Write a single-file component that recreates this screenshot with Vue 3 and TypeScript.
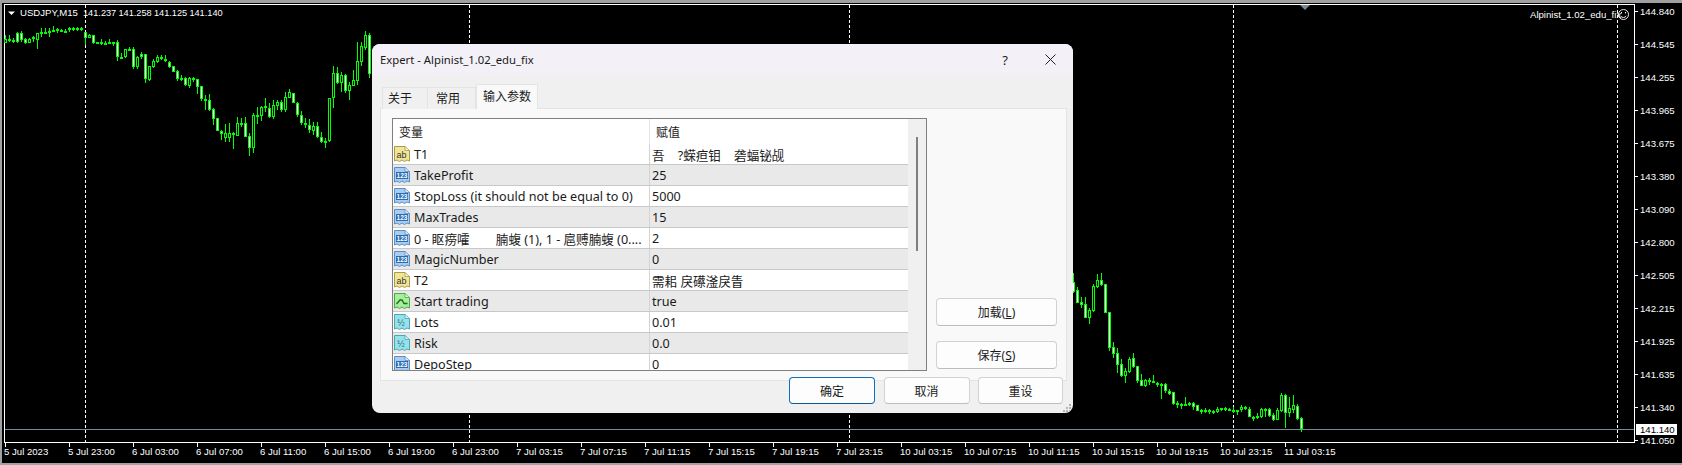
<script setup lang="ts">
type Raw = [number, number, number, number, string]

const leftRaw: Raw[] = [
  [105,118,128,130,'b'],[105,118,122,125,'d'],[115,120,125,128,'d'],[97,100,125,130,'w'],[93,98,120,125,'w'],[115,118,128,132,'w'],
  [113,116,128,130,'b'],[108,112,118,125,'w'],[98,100,120,146,'b'],[85,97,102,110,'d'],[85,97,100,103,'d'],[85,92,100,110,'b'],
  [78,90,92,93,'d'],[84,88,93,100,'d'],[88,90,94,97,'d'],[88,92,95,98,'d'],[82,84,90,95,'w'],[82,85,90,92,'d'],[82,85,90,92,'d'],[82,85,90,92,'d'],
  [97,97,113,135,'w'],[103,105,113,114,'b'],[104,106,130,132,'w'],[125,127,130,132,'d'],[118,125,130,135,'d'],[122,129,131,135,'d'],[118,127,129,132,'d'],[125,127,130,138,'d'],
  [120,127,172,183,'w'],[160,170,173,177,'d'],[148,148,172,173,'b'],[142,147,149,152,'d'],[142,148,200,208,'w'],[168,170,200,208,'b'],[155,162,172,178,'w'],[162,162,238,250,'w'],
  [197,198,240,243,'b'],[178,184,202,205,'b'],[165,170,185,188,'b'],[165,170,176,180,'w'],[165,177,184,187,'w'],[183,185,200,203,'w'],[197,198,215,217,'w'],[210,214,236,242,'w'],
  [225,235,238,243,'d'],[230,235,256,258,'w'],[232,235,258,263,'b'],[230,235,238,245,'d'],[237,238,260,282,'w'],[257,258,298,302,'w'],[285,297,302,330,'d'],[283,300,330,332,'w'],
  [325,328,356,375,'w'],[355,355,392,392,'w'],[390,392,402,420,'w'],[372,400,413,425,'b'],[370,398,413,425,'b'],[395,398,405,447,'d'],[352,370,407,407,'b'],[353,368,371,380,'d'],
  [350,370,410,412,'w'],[400,408,445,467,'w'],[340,345,445,460,'b'],[322,345,347,372,'d'],[318,320,347,362,'b'],[295,318,325,335,'w'],[310,323,350,355,'w'],[300,315,350,358,'b'],
  [300,305,317,330,'b'],[300,305,330,335,'w'],[275,292,330,335,'b'],[268,275,293,295,'b'],[280,280,308,310,'w'],[305,308,346,350,'w'],[332,346,370,375,'w'],[355,368,371,385,'d'],
  [357,375,390,400,'w'],[365,378,392,405,'b'],[365,378,412,415,'w'],[395,412,425,428,'w'],[415,422,425,443,'d'],[295,295,422,425,'b'],[198,220,295,325,'b'],[200,220,250,252,'w'],
  [215,226,250,275,'b'],[222,225,272,278,'w'],[245,255,272,300,'b'],[210,240,257,258,'b'],[127,183,242,255,'b'],[125,138,185,198,'b'],[93,105,145,150,'b'],[100,105,223,235,'w'],
]

const z6 = (a: number, b: number, c: number, d: number, k: string): Raw => [720 + a, 720 + b, 720 + c, 720 + d, k]
const z12 = (a: number, b: number, c: number, d: number, k: string): Raw => [1140 + a, 1140 + b, 1140 + c, 1140 + d, k]

const rightRaw: Raw[] = [
  z6(100,125,155,158,'w'),z6(140,150,188,190,'w'),z6(170,187,195,205,'w'),z6(170,193,233,235,'w'),z6(205,210,233,252,'b'),z6(132,138,212,215,'b'),z6(103,120,140,143,'b'),z6(98,120,135,138,'w'),
  z6(132,133,218,220,'w'),z6(215,217,323,332,'w'),z6(305,322,342,355,'w'),z6(325,340,375,400,'w'),z6(358,373,408,410,'w'),z6(385,393,407,430,'b'),z6(350,358,395,400,'b'),z6(340,355,382,385,'w'),
  z6(378,378,422,430,'w'),z6(402,420,437,438,'w'),z6(418,420,438,442,'b'),z6(415,420,425,435,'d'),z6(405,423,428,430,'d'),z6(425,428,435,440,'w'),z6(430,431,433,477,'d'),z6(430,432,452,458,'w'),
  z6(448,453,462,465,'w'),z6(455,456,492,494,'w'),z6(483,490,496,503,'d'),z6(490,493,497,507,'d'),z6(472,492,495,498,'d'),z6(485,489,495,498,'d'),z6(485,490,500,510,'w'),z6(495,496,512,513,'w'),
  z6(508,510,516,522,'d'),z6(505,510,514,520,'d'),z6(508,510,515,522,'d'),z6(510,512,515,522,'d'),z6(502,507,515,518,'b'),z6(503,505,508,512,'d'),z6(502,505,507,512,'d'),z6(505,506,512,514,'w'),
  z6(500,510,513,520,'d'),z6(510,510,514,525,'d'),z6(495,501,511,515,'b'),z6(498,501,508,510,'w'),
  z12(82,88,110,112,'w'),z12(108,110,111,122,'d'),z12(100,108,110,117,'d'),z12(84,87,110,113,'b'),z12(85,87,88,112,'d'),z12(85,87,108,110,'w'),z12(100,106,120,122,'w'),z12(85,90,119,120,'b'),
  z12(40,45,93,95,'b'),z12(42,45,100,143,'w'),z12(50,85,100,110,'b'),z12(45,75,90,100,'b'),z12(72,78,117,120,'w'),z12(110,115,148,156,'w'),
]

interface Candle { x: number; hi: number; lo: number; top: number; h: number; inner: string }

function build(raw: Raw[], x0: number): Candle[] {
  return raw.map((r, i) => {
    const hi = Math.round(r[0] / 3)
    const lo = Math.round(r[3] / 3)
    const top = Math.round(r[1] / 3)
    const bot = Math.round(r[2] / 3)
    const h = Math.max(bot - top, 2)
    const inner = h <= 2 || r[4] === 'd' ? '' : r[4] === 'w' ? '#ffffff' : '#000000'
    return { x: x0 + i * 4, hi, lo: Math.max(lo, top + h), top, h, inner }
  })
}

const candles: Candle[] = [...build(leftRaw, 5), ...build(rightRaw, 1073)]

const prices = ['144.840','144.545','144.255','143.965','143.675','143.380','143.090','142.800','142.505','142.215','141.925','141.635','141.340','141.050']
  .map((text, i) => ({ text, y: 11 + i * 33 }))

const times = ['5 Jul 2023','5 Jul 23:00','6 Jul 03:00','6 Jul 07:00','6 Jul 11:00','6 Jul 15:00','6 Jul 19:00','6 Jul 23:00','7 Jul 03:15','7 Jul 07:15','7 Jul 11:15','7 Jul 15:15','7 Jul 19:15','7 Jul 23:15','10 Jul 03:15','10 Jul 07:15','10 Jul 11:15','10 Jul 15:15','10 Jul 19:15','10 Jul 23:15','11 Jul 03:15']
  .map((text, i) => ({ text, x: 5 + i * 64 }))

const grids = [85, 469, 849, 1233, 1617]

const rows = [
  { icon: 'str', name: 'T1', value: '吾    ?蝾疸钼    砻蝠铋觇' },
  { icon: 'int', name: 'TakeProfit', value: '25' },
  { icon: 'int', name: 'StopLoss (it should not be equal to 0)', value: '5000' },
  { icon: 'int', name: 'MaxTrades', value: '15' },
  { icon: 'int', name: '0 - 眍痨嚯        腩蝮 (1), 1 - 扈赙腩蝮 (0....', value: '2' },
  { icon: 'int', name: 'MagicNumber', value: '0' },
  { icon: 'str', name: 'T2', value: '需耜 戾礤滏戾眚' },
  { icon: 'bool', name: 'Start trading', value: 'true' },
  { icon: 'dbl', name: 'Lots', value: '0.01' },
  { icon: 'dbl', name: 'Risk', value: '0.0' },
  { icon: 'int', name: 'DepoStep', value: '0' },
]

const iconColors: Record<string, { fill: string; edge: string }> = {
  str: { fill: '#f3e596', edge: '#a89a4a' },
  int: { fill: '#a9cdf2', edge: '#5b8dc4' },
  bool: { fill: '#a4ee9c', edge: '#4fa648' },
  dbl: { fill: '#96e2ea', edge: '#4ba5b2' },
}
</script>

<template>
  <div class="screen">
    <svg class="chart" width="1682" height="465" viewBox="0 0 1682 465">
      <rect x="0" y="0" width="1682" height="3" fill="#a0a0a0" />
      <rect x="0" y="0" width="2" height="465" fill="#a0a0a0" />
      <rect x="0" y="463" width="1682" height="2" fill="#a0a0a0" />
      <g shape-rendering="crispEdges">
        <rect x="4" y="4" width="1631" height="1" fill="#fff" />
        <rect x="4" y="4" width="1" height="439" fill="#fff" />
        <rect x="1634" y="4" width="1" height="439" fill="#fff" />
        <rect x="4" y="442" width="1631" height="1" fill="#fff" />
        <rect x="5" y="429" width="1629" height="1" fill="#778899" />
        <line v-for="g in grids" :key="g" :x1="g + 0.5" :x2="g + 0.5" y1="5" y2="442" stroke="#fff" stroke-dasharray="3 2" />
        <template v-for="c in candles" :key="c.x">
          <rect :x="c.x" :y="c.hi" width="1" :height="c.lo - c.hi" fill="#00ff00" />
          <rect :x="c.x - 1" :y="c.top" width="3" :height="c.h" fill="#00ff00" />
          <rect v-if="c.inner" :x="c.x" :y="c.top + 1" width="1" :height="c.h - 2" :fill="c.inner" />
        </template>
        <rect v-for="p in prices" :key="p.text" x="1635" :y="p.y" width="3" height="1" fill="#fff" />
        <rect v-for="t in times" :key="t.text" :x="t.x" y="443" width="1" height="4" fill="#fff" />
      </g>
      <polygon points="8,11.5 15,11.5 11.5,15" fill="#fff" />
      <polygon points="1300,5 1310,5 1305,10" fill="#778899" />
      <text class="axis" x="20" y="16">USDJPY,M15</text>
      <text class="axis ohlc" x="83" y="16">141.237 141.258 141.125 141.140</text>
      <text class="axis" x="1530" y="18">Alpinist_1.02_edu_fix</text>
      <g fill="none" stroke="#fff" stroke-width="0.9">
        <circle cx="1623.5" cy="14.5" r="5" />
        <path d="M1620.8 16a3.2 3.2 0 0 0 5.4 0" />
      </g>
      <rect x="1621" y="12" width="1" height="1.4" fill="#fff" />
      <rect x="1625" y="12" width="1" height="1.4" fill="#fff" />
      <text v-for="p in prices" :key="p.text" class="axis" x="1640" :y="p.y + 3.5">{{ p.text }}</text>
      <rect x="1636" y="424" width="41" height="11" fill="#fff" />
      <text class="axis dark" x="1640" y="433">141.140</text>
      <text v-for="t in times" :key="t.text" class="axis" :x="t.x - 1" y="455">{{ t.text }}</text>
    </svg>

    <section class="dialog">
      <header class="titlebar">
        <span class="title">Expert - Alpinist_1.02_edu_fix</span>
        <span class="help">?</span>
        <svg class="close" width="11" height="11" viewBox="0 0 11 11">
          <path d="M0.5 0.5L10.5 10.5M10.5 0.5L0.5 10.5" stroke="#222" stroke-width="1" fill="none" />
        </svg>
      </header>
      <div class="body">
        <nav class="tabs">
          <span class="tab t1">关于</span>
          <span class="tab t2">常用</span>
          <span class="tab active">输入参数</span>
        </nav>
        <div class="page">
          <div class="table">
            <div class="scrollbar"><div class="thumb"></div></div>
            <div class="grid">
              <div class="head">
                <span class="c-name">变量</span>
                <span class="c-value">赋值</span>
              </div>
              <div v-for="(r, i) in rows" :key="r.name" class="row" :class="{ alt: i % 2 === 1 }">
                <span class="c-name">
                  <svg class="ico" width="16" height="16" viewBox="0 0 16 16">
                    <path d="M0.5 0.5H11L15.5 4.5V15L13 14L10.5 15.5L8 14L5.5 15.5L3 14L0.5 15Z" :fill="iconColors[r.icon].fill" :stroke="iconColors[r.icon].edge" stroke-width="1" />
                    <path d="M11 0.5V4.5H15.5" fill="#fff" fill-opacity="0.6" :stroke="iconColors[r.icon].edge" stroke-width="0.8" />
                    <template v-if="r.icon === 'int'">
                      <rect x="2" y="5" width="12" height="7" fill="#2a6cb0" />
                      <text x="8" y="11" text-anchor="middle" class="ico-t light">123</text>
                    </template>
                    <text v-else-if="r.icon === 'str'" x="7.6" y="11.5" text-anchor="middle" class="ico-t big">ab</text>
                    <text v-else-if="r.icon === 'dbl'" x="7" y="11.5" text-anchor="middle" class="ico-t big teal">½</text>
                    <path v-else d="M2.5 11L6 7H8L10 10.5H13.5" fill="none" stroke="#1b6b1a" stroke-width="1.3" />
                  </svg>
                  <span class="txt">{{ r.name }}</span>
                </span>
                <span class="c-value txt">{{ r.value }}</span>
              </div>
            </div>
          </div>
          <aside class="side">
            <button class="btn wide">加载(<u>L</u>)</button>
            <button class="btn wide">保存(<u>S</u>)</button>
          </aside>
        </div>
        <footer class="footer">
          <button class="btn primary">确定</button>
          <button class="btn">取消</button>
          <button class="btn last">重设</button>
        </footer>
        <svg class="grip" width="9" height="9" viewBox="0 0 9 9">
          <g fill="#b4b4b4">
            <rect x="6" y="0" width="2" height="2" />
            <rect x="3" y="3" width="2" height="2" />
            <rect x="6" y="3" width="2" height="2" />
            <rect x="0" y="6" width="2" height="2" />
            <rect x="3" y="6" width="2" height="2" />
            <rect x="6" y="6" width="2" height="2" />
          </g>
        </svg>
      </div>
    </section>
  </div>
</template>

<style>
html, body { margin: 0; background: #000; overflow: hidden; }
</style>

<style scoped>
.screen {
  position: relative;
  width: 1682px;
  height: 465px;
  background: #000;
  overflow: hidden;
  font-family: "Noto Sans", "Noto Sans CJK SC", sans-serif;
}
.chart { display: block; }
.axis {
  font-family: "Liberation Sans", sans-serif;
  font-size: 9.6px;
  fill: #fff;
}
.axis.dark { fill: #000; }
.axis.ohlc { font-size: 9.2px; word-spacing: -0.3px; }

.dialog {
  position: absolute;
  left: 372px;
  top: 44px;
  width: 701px;
  height: 369px;
  border-radius: 8px;
  overflow: hidden;
  display: flex;
  flex-direction: column;
  background: #f0f0f0;
  color: #1a1a1a;
  font-size: 12px;
}
.titlebar {
  flex: none;
  height: 31px;
  background: #f3f1f7;
  display: flex;
  align-items: center;
  padding: 0 17px 0 8px;
}
.title { flex: 1; font-size: 11.3px; }
.help { margin-right: 37px; font-size: 13px; }
.close { display: block; }
.body {
  position: relative;
  flex: 1;
  display: flex;
  flex-direction: column;
  padding: 0 6px 0 8px;
  min-height: 0;
}
.tabs {
  flex: none;
  height: 34px;
  display: flex;
  align-items: flex-end;
  padding-left: 2px;
  position: relative;
  z-index: 1;
  margin-bottom: -1px;
}
.tab {
  height: 22px;
  box-sizing: border-box;
  display: flex;
  align-items: center;
  justify-content: center;
  background: #f0f0f0;
  border: 1px solid #e4e4e4;
  border-bottom: none;
}
.t1 { width: 46px; justify-content: flex-start; padding-left: 5px; padding-bottom: 2px; }
.t2 { width: 48px; border-left: none; justify-content: flex-start; padding-left: 8px; padding-bottom: 2px; }
.active {
  width: 62px;
  height: 25px;
  background: #f9f9f9;
  padding-bottom: 3px;
}
.page {
  flex: none;
  height: 273px;
  box-sizing: border-box;
  background: #f9f9f9;
  border: 1px solid #e4e4e4;
  padding: 9px 9px 9px 11px;
  display: flex;
}
.table {
  width: 535px;
  height: 253px;
  box-sizing: border-box;
  border: 1px solid #808080;
  background: #fff;
  display: flex;
  flex-direction: row-reverse;
  overflow: hidden;
}
.scrollbar {
  flex: none;
  width: 18px;
  background: #f0f0f0;
  position: relative;
  display: flex;
  justify-content: center;
  padding-top: 18px;
  box-sizing: border-box;
}
.thumb { width: 2px; height: 114px; background: #808080; }
.grid { flex: 1; min-width: 0; }
.head {
  height: 25px;
  display: flex;
  align-items: center;
}
.head .c-name { padding-left: 6px; }
.head .c-value { padding-left: 6px; border-left: 1px solid #e4e4e4; height: 25px; display: flex; align-items: center; }
.row {
  height: 21px;
  box-sizing: border-box;
  display: flex;
  align-items: center;
  border-bottom: 1px solid #c8c8c8;
  background: #fff;
}
.row.alt { background: #e9e9e9; }
.c-name {
  width: 256px;
  flex: none;
  display: flex;
  align-items: center;
  padding-left: 1px;
  box-sizing: border-box;
  overflow: hidden;
}
.c-value {
  flex: 1;
  padding-left: 3px;
}
.row .c-value {
  border-left: 1px solid #d4d4d4;
  height: 20px;
  display: flex;
  align-items: center;
  padding-left: 2px;
}
.ico { flex: none; display: block; margin-right: 4px; }
.txt { white-space: pre; font-size: 12.6px; }
.ico-t { font-family: "Liberation Sans", sans-serif; font-size: 6.5px; font-weight: 700; fill: #123; }
.ico-t.light { fill: #fff; }
.ico-t.big { font-size: 9px; font-weight: 400; fill: #333; }
.ico-t.teal { fill: #1d6b78; }
.side {
  margin-left: 9px;
  flex: 1;
  display: flex;
  flex-direction: column;
  justify-content: flex-end;
  gap: 15px;
  padding-bottom: 2px;
}
.btn {
  font: inherit;
  font-size: 12px;
  color: #1a1a1a;
  width: 86px;
  height: 27px;
  padding: 0;
  background: #fdfdfd;
  border: 1px solid #d2d2d2;
  border-bottom-color: #bdbdbd;
  border-radius: 4px;
}
.btn.wide { width: 121px; height: 28px; }
.btn.last { width: 85px; }
.btn.primary { border-color: #0f6cbd; border-bottom-color: #0a5aa0; }
.footer {
  position: relative;
  display: flex;
  justify-content: flex-end;
  gap: 8.5px;
  margin-top: -4px;
  padding-right: 4px;
}
.grip { position: absolute; right: 1px; bottom: 0; }
</style>
